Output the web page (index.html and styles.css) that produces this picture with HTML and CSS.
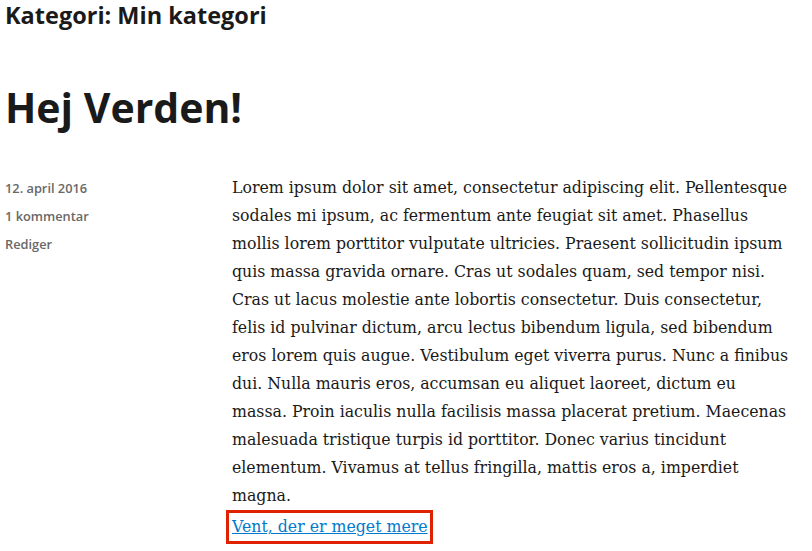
FILE: index.html
```html
<!DOCTYPE html>
<html lang="da">
<head>
  <meta charset="UTF-8" />
  <title>Kategori: Min kategori</title>
  <link rel="stylesheet" href="styles.css">
</head>
<body>
  <header class="page-header">
    <h1 class="page-title">Kategori: Min kategori</h1>
  </header>

  <article class="post">
    <h2 class="entry-title">Hej Verden!</h2>
    <div class="entry-body">
      <footer class="entry-meta">
        <span>12. april 2016</span>
        <span>1 kommentar</span>
        <span>Rediger</span>
      </footer>
      <div class="entry-content">
        <p>Lorem ipsum dolor sit amet, consectetur adipiscing elit. Pellentesque sodales mi ipsum, ac fermentum ante feugiat sit amet. Phasellus mollis lorem porttitor vulputate ultricies. Praesent sollicitudin ipsum quis massa gravida ornare. Cras ut sodales quam, sed tempor nisi. Cras ut lacus molestie ante lobortis consectetur. Duis consectetur, felis id pulvinar dictum, arcu lectus bibendum ligula, sed bibendum eros lorem quis augue. Vestibulum eget viverra purus. Nunc a finibus dui. Nulla mauris eros, accumsan eu aliquet laoreet, dictum eu massa. Proin iaculis nulla facilisis massa placerat pretium. Maecenas malesuada tristique turpis id porttitor. Donec varius tincidunt elementum. Vivamus at tellus fringilla, mattis eros a, imperdiet magna.</p>
        <a class="more-link" href="#">Vent, der er meget mere</a>
      </div>
    </div>
  </article>
</body>
</html>
```

FILE: styles.css
```css
body {
  margin: 0;
  padding: 0 8px 0 5px;
  background: #fff;
  color: #1a1a1a;
  font-family: "DejaVu Serif", serif;
}
.page-title {
  margin: 0;
  padding-top: 1px;
  font-family: "Open Sans", sans-serif;
  font-size: 23.5px;
  font-weight: 700;
  line-height: 28px;
}
.entry-title {
  margin: 50px 0 0;
  font-family: "Open Sans", sans-serif;
  font-size: 41px;
  font-weight: 700;
  line-height: 56px;
}
.entry-body {
  display: grid;
  grid-template-columns: 227px 562px;
  margin-top: 39px;
}
.entry-meta {
  display: flex;
  flex-direction: column;
  font-family: "Open Sans", sans-serif;
  font-size: 12.8px;
  font-weight: 600;
  line-height: 28px;
  color: #686868;
}
.entry-content {
  font-size: 15.75px;
  line-height: 28px;
}
.entry-content p {
  margin: 0;
}
.more-link {
  display: inline-block;
  border: 3px solid #e02200;
  padding: 0 2px 0 3px;
  color: #007acc;
  line-height: 28px;
  margin-left: -6px;
}
```
